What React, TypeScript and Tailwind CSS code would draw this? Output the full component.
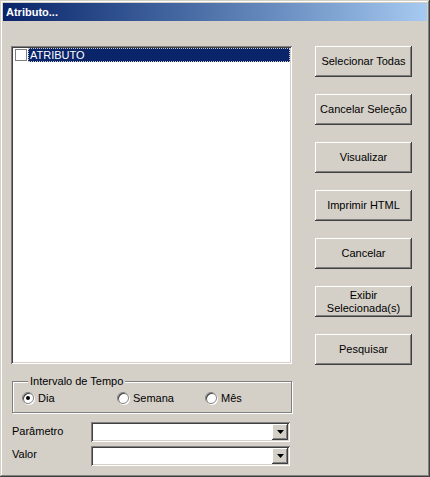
const raised =
  'shadow-[inset_-1px_-1px_#404040,inset_1px_1px_#ffffff,inset_-2px_-2px_#808080,inset_2px_2px_#d4d0c8]';
const sunken =
  'shadow-[inset_1px_1px_#808080,inset_-1px_-1px_#ffffff,inset_2px_2px_#404040,inset_-2px_-2px_#d4d0c8]';

function Button({ children }: { children: React.ReactNode }) {
  return (
    <div
      className={`w-[97px] h-[31px] bg-[#d4d0c8] ${raised} flex items-center justify-center text-center leading-[13px] text-black`}
    >
      {children}
    </div>
  );
}

function Radio({ label, checked, className = '' }: { label: string; checked?: boolean; className?: string }) {
  return (
    <div className={`flex items-center gap-[4px] ${className}`}>
      <div className="w-[12px] h-[12px] rounded-full bg-white border border-[#808080] shadow-[inset_1px_1px_#404040,1px_1px_#ffffff] flex items-center justify-center">
        {checked && <div className="w-[4px] h-[4px] rounded-full bg-black" />}
      </div>
      <span>{label}</span>
    </div>
  );
}

function Combo() {
  return (
    <div className={`w-[199px] h-[20px] bg-white ${sunken} p-[2px] flex justify-end`}>
      <div className={`w-[16px] h-[16px] bg-[#d4d0c8] ${raised} flex items-center justify-center`}>
        <svg width="7" height="4" viewBox="0 0 7 4">
          <path d="M0 0h7L3.5 4z" fill="#000" />
        </svg>
      </div>
    </div>
  );
}

export default function App() {
  return (
    <div
      className="w-[430px] h-[477px] bg-[#d4d0c8] p-[3px] shadow-[inset_-1px_-1px_#404040,inset_1px_1px_#d4d0c8,inset_-2px_-2px_#808080,inset_2px_2px_#ffffff] text-[11px] text-black"
      style={{ fontFamily: '"Liberation Sans", Arial, sans-serif' }}
    >
      <div className="h-[18px] bg-gradient-to-r from-[#0a246a] to-[#a6caf0] text-white font-bold text-[11px] pl-[3px] flex items-center">
        Atributo...
      </div>

      <div className="flex pt-[25px] pl-[8px]">
        <div className="w-[281px] flex flex-col">
          <div className={`h-[318px] bg-white ${sunken} p-[2px]`}>
            <div className="flex items-center h-[14px]">
              <div className="w-[12px] h-[12px] ml-[2px] mr-[1px] border border-[#808080] bg-white" />
              <div className="flex-1 h-[14px] bg-[#0a246a] text-white border border-dotted border-[#c8c8c8] pl-[1px] leading-[12px]">
                ATRIBUTO
              </div>
            </div>
          </div>

          <fieldset className="mt-[11px] ml-[1px] h-[38px] border border-[#808080] shadow-[inset_1px_1px_#ffffff,1px_1px_#ffffff] px-[9px]">
            <legend className="ml-[6px] px-[2px] leading-[13px] bg-[#d4d0c8]">Intervalo de Tempo</legend>
            <div className="flex items-center mt-[2px]">
              <Radio label="Dia" checked className="w-[95px]" />
              <Radio label="Semana" className="w-[88px]" />
              <Radio label="Mês" />
            </div>
          </fieldset>

          <div className="flex flex-col gap-[4px] mt-[9px]">
            <div className="flex items-start">
              <span className="w-[80px] pl-[1px] mt-[1px]">Parâmetro</span>
              <Combo />
            </div>
            <div className="flex items-start">
              <span className="w-[80px] pl-[1px]">Valor</span>
              <Combo />
            </div>
          </div>
        </div>

        <div className="ml-[23px] flex flex-col gap-[17px]">
          <Button>Selecionar Todas</Button>
          <Button>Cancelar Seleção</Button>
          <Button>Visualizar</Button>
          <Button>Imprimir HTML</Button>
          <Button>Cancelar</Button>
          <Button>
            Exibir
            <br />
            Selecionada(s)
          </Button>
          <Button>Pesquisar</Button>
        </div>
      </div>
    </div>
  );
}
